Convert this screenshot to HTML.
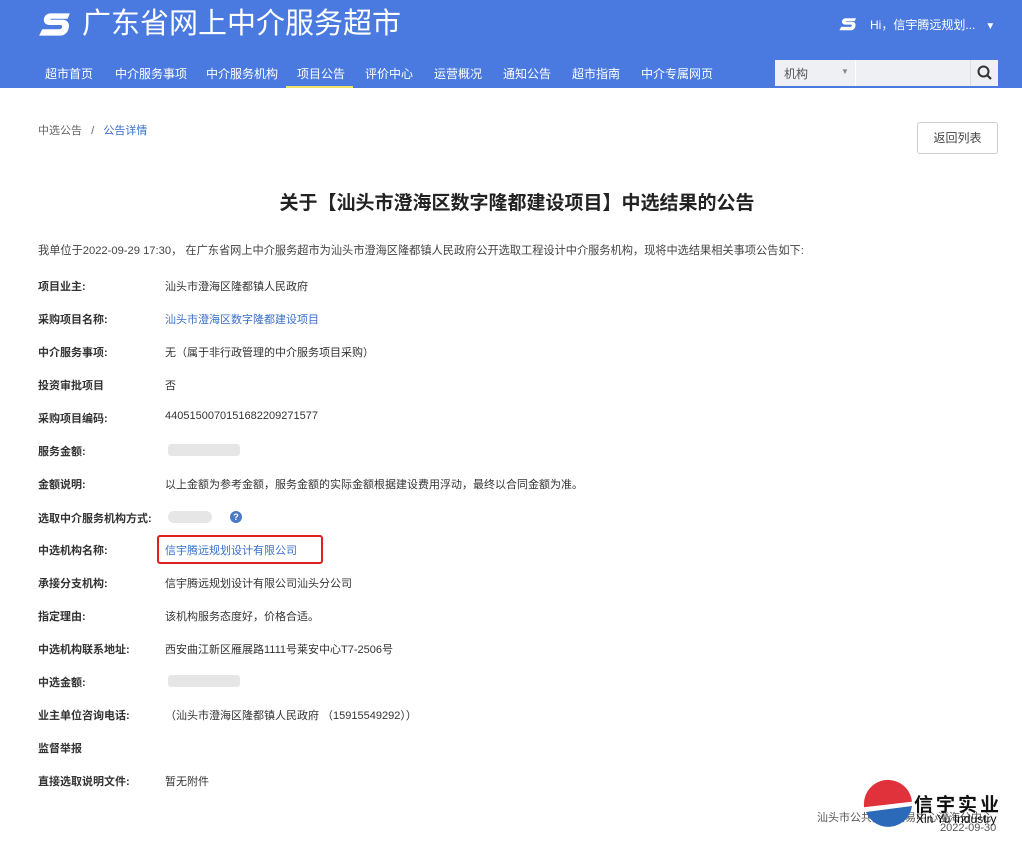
<!DOCTYPE html>
<html><head><meta charset="utf-8"><style>
*{margin:0;padding:0;box-sizing:border-box}
body{width:1022px;height:847px;overflow:hidden;background:#fff;font-family:"Liberation Sans","Noto Sans CJK SC",sans-serif;color:#333;position:relative;font-size:11px}
.hd{position:absolute;left:0;top:0;width:1022px;height:88px;background:#4a7ae0}
.logo{position:absolute;left:37px;top:9px;width:36px;height:30px}
.title{position:absolute;left:82px;top:5px;color:#fff;font-size:29px;line-height:38px}
.user{position:absolute;left:870px;top:16px;color:#fff;font-size:12px}
.nav{position:absolute;top:65px;color:#fff;font-size:12px}
.nav span{position:absolute;white-space:nowrap}
.act{position:absolute;left:286px;top:86px;width:67px;height:2px;background:#f2e36a}
.srch{position:absolute;left:775px;top:60px;width:223px;height:26px;background:#eef0f3;font-size:12px}
.abs{position:absolute;white-space:nowrap}
.lab{position:absolute;left:38px;font-weight:bold;font-size:11px;color:#333}
.val{position:absolute;left:165px;font-size:11px;color:#333}
.blue{color:#3a6fc9}
.blur{position:absolute;height:12px;background:#e6e6e6;border-radius:3px}
</style></head><body>
<div class="hd">
<svg class="logo" viewBox="0 0 34 28"><path d="M31 4 H13 C5 4 4 15 12 15 H22 C25 15 24 19 21 19 H5 L2 25 H22 C31 25 34 10 24 10 H14 C12 10 12 9 14 9 H29 Z" fill="#fff"/></svg>
<div class="title">广东省网上中介服务超市</div>
<svg style="position:absolute;left:838px;top:16px" width="20" height="16" viewBox="0 0 34 28"><path d="M31 4 H13 C5 4 4 15 12 15 H22 C25 15 24 19 21 19 H5 L2 25 H22 C31 25 34 10 24 10 H14 C12 10 12 9 14 9 H29 Z" fill="#fff"/></svg>
<div class="user">Hi，信宇腾远规划...&nbsp;&nbsp;&nbsp;<span style="font-size:10px">▼</span></div>
<div class="nav">
<span style="left:45px">超市首页</span><span style="left:115px">中介服务事项</span><span style="left:206px">中介服务机构</span><span style="left:297px">项目公告</span><span style="left:365px">评价中心</span><span style="left:434px">运营概况</span><span style="left:503px">通知公告</span><span style="left:572px">超市指南</span><span style="left:641px">中介专属网页</span>
</div>
<div class="act"></div>
<div class="srch">
<span class="abs" style="left:9px;top:5px;color:#555">机构</span>
<span class="abs" style="left:66px;top:7px;color:#888;font-size:8px">▼</span>
<div style="position:absolute;left:80px;top:0;width:1px;height:26px;background:#fff"></div>
<div style="position:absolute;left:195px;top:0;width:28px;height:26px;border-left:1px solid #ddd"></div>
<svg style="position:absolute;left:202px;top:5px" width="15" height="15" viewBox="0 0 15 15"><circle cx="6.5" cy="6.5" r="5" fill="none" stroke="#333" stroke-width="2"/><path d="M10 10 L14 14" stroke="#333" stroke-width="2.2"/></svg>
</div>
</div>
<div class="abs" style="left:38px;top:122px;color:#666">中选公告 &nbsp;&nbsp;/&nbsp;&nbsp; <span class="blue">公告详情</span></div>
<div style="position:absolute;left:917px;top:122px;width:81px;height:32px;border:1px solid #ccc;border-radius:3px;text-align:center;line-height:30px;color:#444;font-size:12px">返回列表</div>
<div class="abs" style="left:0;width:1034px;top:188px;text-align:center;font-size:19px;font-weight:bold;color:#222">关于【汕头市澄海区数字隆都建设项目】中选结果的公告</div>
<div class="abs" style="left:38px;top:242px;color:#444;font-size:11.2px">我单位于2022-09-29 17:30， 在广东省网上中介服务超市为汕头市澄海区隆都镇人民政府公开选取工程设计中介服务机构，现将中选结果相关事项公告如下:</div>

<div class="lab" style="top:278px">项目业主:</div><div class="val" style="top:278px">汕头市澄海区隆都镇人民政府</div>
<div class="lab" style="top:311px">采购项目名称:</div><div class="val blue" style="top:311px">汕头市澄海区数字隆都建设项目</div>
<div class="lab" style="top:344px">中介服务事项:</div><div class="val" style="top:344px">无（属于非行政管理的中介服务项目采购）</div>
<div class="lab" style="top:377px">投资审批项目</div><div class="val" style="top:377px">否</div>
<div class="lab" style="top:410px">采购项目编码:</div><div class="val" style="top:410px">4405150070151682209271577</div>
<div class="lab" style="top:443px">服务金额:</div><div class="blur" style="left:168px;top:444px;width:72px"></div>
<div class="lab" style="top:476px">金额说明:</div><div class="val" style="top:476px">以上金额为参考金额，服务金额的实际金额根据建设费用浮动，最终以合同金额为准。</div>
<div class="lab" style="top:510px">选取中介服务机构方式:</div><div class="blur" style="left:168px;top:511px;width:44px;border-radius:6px"></div>
<div style="position:absolute;left:230px;top:511px;width:12px;height:12px;border-radius:50%;background:#4a7ac8;color:#fff;font-size:9px;text-align:center;line-height:12px;font-weight:bold">?</div>
<div class="lab" style="top:542px">中选机构名称:</div>
<div style="position:absolute;left:157px;top:535px;width:166px;height:29px;border:2px solid #e02020;border-radius:3px"></div>
<div class="val blue" style="top:542px">信宇腾远规划设计有限公司</div>
<div class="lab" style="top:575px">承接分支机构:</div><div class="val" style="top:575px">信宇腾远规划设计有限公司汕头分公司</div>
<div class="lab" style="top:608px">指定理由:</div><div class="val" style="top:608px">该机构服务态度好，价格合适。</div>
<div class="lab" style="top:641px">中选机构联系地址:</div><div class="val" style="top:641px">西安曲江新区雁展路1111号莱安中心T7-2506号</div>
<div class="lab" style="top:674px">中选金额:</div><div class="blur" style="left:168px;top:675px;width:72px"></div>
<div class="lab" style="top:707px">业主单位咨询电话:</div><div class="val" style="top:707px">（汕头市澄海区隆都镇人民政府 （15915549292））</div>
<div class="lab" style="top:740px">监督举报</div>
<div class="lab" style="top:773px">直接选取说明文件:</div><div class="val" style="top:773px">暂无附件</div>

<div class="abs" style="left:817px;top:809px;font-size:11px;color:#555">汕头市公共资源交易中心澄海分中心</div>
<div class="abs" style="left:940px;top:822px;font-size:11px;color:#555">2022-09-30</div>
<svg style="position:absolute;left:860px;top:778px" width="55" height="55" viewBox="0 0 55 55"><path d="M4 28 A24 24 0 0 1 52 24 L4 30 Z" fill="#e0323a"/><path d="M6 34 L52 28 A24 24 0 0 1 6 34 Z" fill="#2a6ab8"/><path d="M2 31 L54 25" stroke="#fff" stroke-width="3"/></svg>
<div class="abs" style="left:914px;top:790px;font-size:19px;font-weight:bold;color:#111;letter-spacing:3px">信宇实业</div>
<div class="abs" style="left:916px;top:812px;font-size:12px;color:#111">Xin Yu Industry</div>
</body></html>
